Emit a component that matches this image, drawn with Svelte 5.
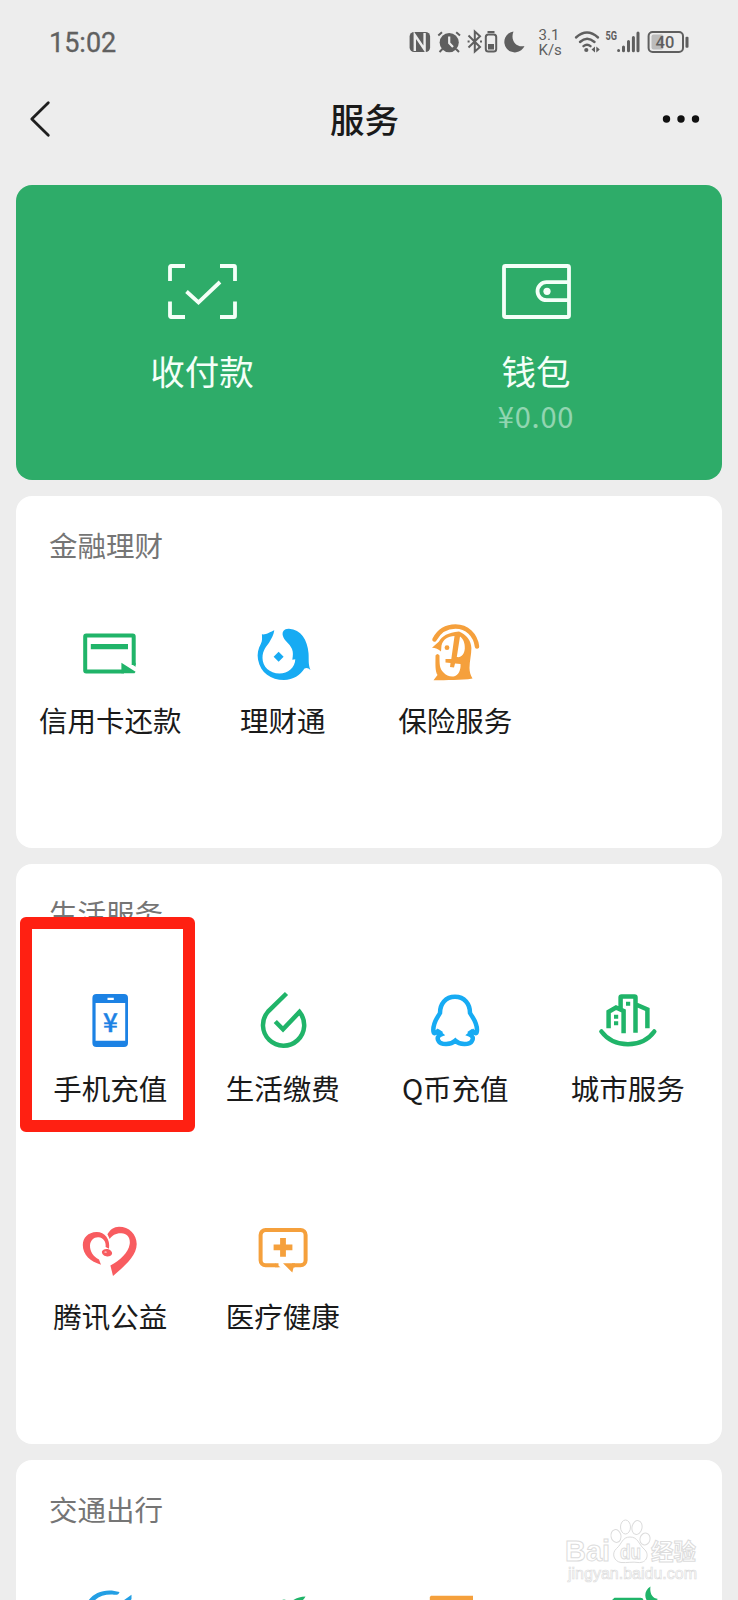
<script lang="ts">
  type Item = { icon: string; label?: string };
  type Section = { title: string; items: Item[] };

  const sections: Section[] = [
    {
      title: '金融理财',
      items: [
        { icon: 'card', label: '信用卡还款' },
        { icon: 'fish', label: '理财通' },
        { icon: 'umbrella', label: '保险服务' },
      ],
    },
    {
      title: '生活服务',
      items: [
        { icon: 'phone', label: '手机充值' },
        { icon: 'drop', label: '生活缴费' },
        { icon: 'penguin', label: 'Q币充值' },
        { icon: 'city', label: '城市服务' },
        { icon: 'heart', label: '腾讯公益' },
        { icon: 'medical', label: '医疗健康' },
      ],
    },
    {
      title: '交通出行',
      items: [{ icon: 'travel' }, { icon: 'leaf' }, { icon: 'ticket' }, { icon: 'hotel' }],
    },
  ];
</script>

<!-- every service icon is drawn on a 64×64 box -->
{#snippet glyph(name: string)}
  <svg class="icon" viewBox="0 0 64 64" aria-hidden="true">
    {#if name === 'card'}
      <g class="green">
        <path class="line" d="M55.7 44V15.5a1 1 0 0 0-1-1H8.2a1 1 0 0 0-1 1V49.5a1 1 0 0 0 1 1H46" />
        <path d="M12.8 23H50v5.2H12.8z" />
        <path d="M43.4 41.7 57.6 50.7 56.5 52.3H43.4zM53.8 43.2l3.8 2.6v-4z" />
      </g>
    {:else if name === 'fish'}
      <g class="sky">
        <path
          d="M23.3 9.2C20 10.5 15 14 10.9 13.3C11 17 11.5 19.5 10 22.5C7 28 6 33 7 38.5C9.5 52 20 59 33 59C42 59 49.5 54 53.5 47.5C55.5 46.3 57.5 47 59.5 49C57 43.5 58 38 57.5 32C56.5 19 50 8.5 38 7.7C33 7.5 31 10.5 31.8 14.5C32.8 19.5 38.5 22 41 28C42.3 31.5 42 34.5 41.3 38.8L44.3 38.2C44 46.5 37 52.5 28.5 52.5C18.5 52.5 11.5 45.5 11.5 37C11.5 29 15.5 25.5 18.2 21.5C20.5 17.5 22.6 14 23.3 9.2Z"
        />
        <path d="M27.6 30.7l5 5-5 5-5-5z" />
      </g>
    {:else if name === 'umbrella'}
      <g class="orange">
        <path class="line thick round" d="M11.5 18.5C16 10 23.5 5.5 32.5 5.5C44 5.5 52.5 14 54 25.5" />
        <path
          fill-rule="evenodd"
          d="M9 26.7L16 20.5C19 15 25 11.5 36 10.5C43 13 48.4 20 48.4 27C48.4 34 46.5 40 46.5 47C46.5 51 47.5 54 49.5 57.5C38 59.5 24 59 10.5 59.2L14.5 54C12 50 12.5 44 12.5 34.5Q14.5 31.5 16.5 34.5C16.5 43 16.5 48 20.5 51.5C23 54.5 27 56 30.5 55.5C35.5 54.5 38 49 37.5 43L32 42.5 31 46.5 27 46 27.5 42 22.5 41.5V38H28.3L31.5 15C25 15 20 18.5 18.5 24.5L18 30.5C15.5 28 12.5 27 9 26.7ZM37 15.5L33.8 36C38 37 41.5 33 41.8 27.5C42 22.5 40.5 18 37 15.5Z"
        />
        <circle cx="24" cy="26.7" r="2.4" />
      </g>
    {:else if name === 'phone'}
      <g class="blue">
        <path
          fill-rule="evenodd"
          d="M18.4 5H46a4 4 0 0 1 4 4v45a4 4 0 0 1-4 4H18.4a4 4 0 0 1-4-4V9a4 4 0 0 1 4-4zM17.6 14v37.7h29.6V14zM29.5 8.7v2.2h6.3V8.7z"
        />
        <text class="yen" x="32.4" y="43.3" text-anchor="middle">¥</text>
      </g>
    {:else if name === 'drop'}
      <g class="green">
        <path class="line thick" d="M35.5 4.5L17 22.6A20.6 20.6 0 1 0 48.5 23L32 40.3L24.3 32.5" />
      </g>
    {:else if name === 'penguin'}
      <g class="sky">
        <path
          class="line thick"
          d="M32 7.8C22.5 7.8 17 15 17 24C14.5 28.5 10.3 33 10.3 41C10.3 45.5 12.5 44.5 14.5 42.5L18 45.5C14.5 47 14 49.5 15.5 51.8C18 56.3 28 55.8 32.3 51.6C36.5 55.8 46.5 56.3 49 51.8C50.5 49.5 50 47 46.5 45.5L50 42.5C52 44.5 54 45.5 54 41C54 33 49.5 28.5 47 24C47 15 41.5 7.8 32 7.8Z"
        />
        <path d="M15.5 40l4.5 3-3 4-4-2.5zM48.8 40l-4.5 3 3 4 4-2.5z" />
      </g>
    {:else if name === 'city'}
      <g class="green">
        <path class="line thick" d="M12.6 39.3V22.7L20 18.5L27.6 22V44.3M24.6 20V8.5a1 1 0 0 1 1-1H38.5a1 1 0 0 1 1 1V43.7M40 15.5L51.4 20.5V39.3" />
        <path class="line thick round" d="M5.4 42.5C18 59.5 46 59.5 58.3 42.5" />
        <path d="M18 25.7h4.2v4H18zM18 32.3h4.2v4H18zM30 12.7h4.2v4H30z" />
      </g>
    {:else if name === 'heart'}
      <g class="red">
        <path
          d="M31 31.8C32.5 22 26.5 14.8 18.5 15C10 15.2 4.8 21 4.8 28C4.8 38 12.5 44.5 23 47.7L21 42.5C15 39.5 11.8 34 12 28.5C12.2 23.5 16 20 20.5 20.3C25.5 20.7 28.3 25 27.6 30Z"
        />
        <path
          d="M29.4 17.3C32 12.5 36 9.7 41 9.7C51 9.7 58.7 17 58.7 27C58.7 39 47 48.5 35 59L32.4 48.5C42 43.5 50.5 35.5 51.7 27C52.5 20.5 49 16.5 43.5 16.3C38 16 34 18.5 31.7 22Z"
        />
        <ellipse cx="29" cy="35.7" rx="5.2" ry="3.7" transform="rotate(12 29 35.7)" />
        <ellipse class="shine" cx="27.6" cy="35" rx="1.3" ry=".6" />
      </g>
    {:else if name === 'medical'}
      <g class="orange">
        <path class="line" d="M27.5 48.3H14.6a5 5 0 0 1-5-5V18a5 5 0 0 1 5-5H49.6a5 5 0 0 1 5 5V43.3a5 5 0 0 1-5 5H41" />
        <path d="M32 46.3H44V50.3L42.6 50.5 41.3 55.5zM24 46.3l5.5 4H24z" />
        <path d="M29.1 21h5.8v6.5h6.5v5.8h-6.5v6.5h-5.8v-6.5h-6.5v-5.8h6.5z" />
      </g>
    {:else if name === 'travel'}
      <g class="azure">
        <path d="M9 18C14 8 27 2.5 41.5 7C41 9.5 39 10 36 9.7C27 9 19 11.5 14.5 18Z" />
        <path d="M42 18L53.5 9.7V14L51 18z" />
      </g>
    {:else if name === 'leaf'}
      <g class="green">
        <path d="M40 17C44 13 49 11.7 54.5 11.5C53.5 14 51 16 48 18zM29 16.5Q33 12.5 37 16.5z" />
      </g>
    {:else if name === 'ticket'}
      <g class="orange">
        <path d="M8 10.7H50V40H6.8V12z" />
      </g>
    {:else if name === 'hotel'}
      <g class="green">
        <path d="M18.5 12.7H44.5a3 3 0 0 1 3 3V40H15V16z" />
        <path d="M54.5 1.5C47 6 48 16 55 19L62 14C56 13 53.5 8 54.5 1.5Z" />
      </g>
    {/if}
  </svg>
{/snippet}

<div class="screen">
  <header class="status">
    <span class="time">15:02</span>
    <svg class="indicators" width="320" height="50" viewBox="0 0 320 50" aria-hidden="true">
      <!-- nfc -->
      <rect x="19.6" y="12" width="20.5" height="20" rx="4.5" />
      <path class="cut" d="M24.8 31V15L34.6 29.5V13" />
      <!-- alarm -->
      <circle cx="59.2" cy="22.6" r="9.6" />
      <path class="thin" d="M48.3 15.5L52 12.3M66.2 12.3L70 15.5M52.5 29l-3 3M66 29l3 3" />
      <path class="cut slim" d="M59.2 16.5V23L63 27" />
      <!-- bluetooth with its battery -->
      <path class="thin" d="M78.5 15.5L90 27 84.8 31.5V11.5L90 16.2 78.5 27.5" />
      <path class="thin" d="M77.6 21.6h2M90 21.6h2" />
      <rect class="thin" x="95.8" y="14.6" width="10.4" height="17" rx="2.5" />
      <path d="M97.5 11h7v2h-7zM98 24h6v5.5h-6z" />
      <!-- do not disturb -->
      <path d="M123.5 11.5A10.5 10.5 0 1 0 134.5 26C126 28 120 20 123.5 11.5Z" />
      <text class="rate" x="148.5" y="19.5">3.1</text>
      <text class="rate" x="148.5" y="35">K/s</text>
      <!-- wifi -->
      <g class="wave">
        <path d="M186 17.5Q197 7.5 208 17.5" />
        <path d="M190 22Q197 15.5 204.5 22" />
        <path d="M193.5 26.2Q197 23.2 200.5 26.2" />
      </g>
      <circle cx="196.3" cy="30" r="2.1" />
      <path d="M205 26.5v6l-3.5-3zM206.3 26.5v6l3.5-3z" />
      <!-- cellular -->
      <text class="gen" x="215.5" y="20.3" textLength="11.5" lengthAdjust="spacingAndGlyphs">5G</text>
      <g class="bars">
        <path d="M228.6 30.5v.1M233.5 27v3.8M238.5 21.5v9.3M243.4 17.5v13.3M248 13v17.8" />
      </g>
      <!-- battery -->
      <rect class="fill" x="261.5" y="14.5" width="12" height="15" rx="2" />
      <rect class="thin" x="258.6" y="12" width="34.4" height="20" rx="4" />
      <rect x="295.5" y="16.8" width="3" height="11" rx="1" />
      <text class="level" x="265.5" y="28">40</text>
    </svg>
  </header>

  <nav class="bar">
    <svg class="back" width="24" height="40" viewBox="0 0 24 40" aria-hidden="true">
      <path d="M20.3 3.7L3.8 20L20.3 36.3" />
    </svg>
    <h1>服务</h1>
    <svg class="more" width="40" height="10" viewBox="0 0 40 10" aria-hidden="true">
      <circle cx="5.5" cy="5" r="3.7" />
      <circle cx="20" cy="5" r="3.7" />
      <circle cx="34.5" cy="5" r="3.7" />
    </svg>
  </nav>

  <main>
    <section class="pay">
      <div class="half">
        <svg width="69" height="55" viewBox="0 0 69 55" aria-hidden="true">
          <path d="M17 2H3a1 1 0 0 0-1 1V17M52 2H66a1 1 0 0 1 1 1V17M17 53H3a1 1 0 0 1-1-1V37.5M52 53H66a1 1 0 0 0 1-1V37.5" />
          <path d="M18.5 27.5L30.5 38.5L52 18" />
        </svg>
        <span class="name">收付款</span>
      </div>
      <div class="half">
        <svg width="69" height="55" viewBox="0 0 69 55" aria-hidden="true">
          <rect x="2" y="2" width="65" height="51" rx="1.5" />
          <path d="M67 18.2H44.5a9 9 0 0 0 0 18H67" />
          <circle class="dot" cx="45" cy="27.3" r="3.6" />
        </svg>
        <span class="name">钱包</span>
        <span class="balance">¥0.00</span>
      </div>
    </section>

    {#each sections as section (section.title)}
      <section class="card">
        <h2>{section.title}</h2>
        <div class="grid">
          {#each section.items as item (item.icon)}
            <div class="item">
              {@render glyph(item.icon)}
              {#if item.label}<span>{item.label}</span>{/if}
            </div>
          {/each}
        </div>
      </section>
    {/each}
  </main>

  <div class="marker"></div>

  <svg class="watermark" width="150" height="80" viewBox="0 0 150 80" aria-hidden="true">
    <text class="brand" x="5" y="46" font-size="30" textLength="45" lengthAdjust="spacingAndGlyphs">Bai</text>
    <ellipse cx="56" cy="21" rx="5" ry="6.5" transform="rotate(-12 56 21)" />
    <ellipse cx="65.5" cy="12" rx="5" ry="7" />
    <ellipse cx="77" cy="12.5" rx="5" ry="7" transform="rotate(12 77 12.5)" />
    <ellipse cx="85" cy="24" rx="5" ry="6" transform="rotate(15 85 24)" />
    <path d="M70 22C62 22 62 29 56.5 33.5C51 38.5 54 46.5 61 47.5C67 48 73 46.5 78 47.5C87 48.5 90 39 84 34C78.5 29 78 22 70 22Z" />
    <text class="brand" x="60" y="43.5" font-size="20" textLength="21" lengthAdjust="spacingAndGlyphs">du</text>
    <text class="brand" x="91" y="45" font-size="22.5" textLength="45">经验</text>
    <text class="url" x="8" y="64" font-size="17" textLength="129" lengthAdjust="spacingAndGlyphs">jingyan.baidu.com</text>
  </svg>
</div>

<style>
  :global(body) {
    margin: 0;
    background: #ededed;
  }
  .screen {
    position: relative;
    width: 738px;
    height: 1600px;
    overflow: hidden;
    background: #ededed;
    color: #1a1a1a;
    font-family: 'Noto Sans CJK SC', sans-serif;
  }

  .status {
    display: flex;
    justify-content: space-between;
    height: 64px;
    box-sizing: border-box;
    padding: 10px 28px 0 49px;
    color: #606060;
    font-family: Roboto, sans-serif;
  }
  .time {
    font-size: 27px;
    line-height: 66px;
    -webkit-text-stroke: 0.3px #606060;
  }
  .indicators {
    margin-top: 10px;
    fill: #5f5f5f;
  }
  .thin,
  .cut,
  .wave path,
  .bars path {
    fill: none;
    stroke: #5f5f5f;
    stroke-width: 2;
  }
  .cut {
    stroke: #ededed;
    stroke-width: 2.4;
  }
  .cut.slim {
    stroke-width: 2.2;
  }
  .wave path {
    stroke-width: 2.4;
    stroke-linecap: round;
  }
  .bars path {
    stroke-width: 3;
    stroke-linecap: round;
  }
  .fill {
    fill: #bcbcbc;
  }
  .rate {
    font-size: 15px;
  }
  .gen {
    font-size: 12.5px;
    font-weight: 700;
  }
  .level {
    font-size: 16.5px;
    font-weight: 500;
  }

  .bar {
    display: grid;
    grid-template-columns: 60px 1fr 60px;
    align-items: center;
    height: 110px;
    padding: 0 37px 0 28px;
  }
  .back path {
    fill: none;
    stroke: #1f1f1f;
    stroke-width: 2.8;
    stroke-linecap: round;
    stroke-linejoin: round;
  }
  .more {
    justify-self: end;
    fill: #111;
  }
  h1 {
    margin: 0 0 3px;
    font-size: 34.5px;
    line-height: 48px;
    font-weight: 500;
    text-align: center;
  }

  main {
    display: flex;
    flex-direction: column;
    gap: 16px;
    padding: 11px 16px 0;
  }
  .pay {
    display: flex;
    height: 295px;
    box-sizing: border-box;
    padding: 79px 19px 0;
    border-radius: 16px;
    background: #2eac69;
    color: #f4fff8;
  }
  .half {
    flex: 1;
    display: flex;
    flex-direction: column;
    align-items: center;
  }
  .half svg {
    fill: none;
    stroke: #f4fff8;
    stroke-width: 3.8;
  }
  .half .dot {
    fill: #f4fff8;
    stroke: none;
  }
  .name {
    margin-top: 27px;
    font-size: 34.5px;
    line-height: 48px;
  }
  .balance {
    font-size: 29px;
    line-height: 42px;
    letter-spacing: 0.8px;
    opacity: 0.5;
  }

  .card {
    padding: 0 8px 24px;
    border-radius: 16px;
    background: #fff;
  }
  h2 {
    margin: 0;
    padding: 0 0 0 25px;
    height: 100px;
    font-size: 28.5px;
    line-height: 98px;
    font-weight: 400;
    color: #757575;
  }
  .grid {
    display: grid;
    grid-template-columns: repeat(4, 1fr);
    grid-auto-rows: 228px;
  }
  .item {
    display: flex;
    flex-direction: column;
    align-items: center;
    padding-top: 25px;
    font-size: 28.5px;
    line-height: 40px;
    white-space: nowrap;
  }
  .icon {
    width: 64px;
    height: 64px;
    margin-bottom: 15px;
  }
  .green { fill: #20b469; stroke: #20b469; }
  .sky { fill: #17abf3; stroke: #17abf3; }
  .azure { fill: #239fe4; }
  .orange { fill: #f5a03c; stroke: #f5a03c; }
  .blue { fill: #1c82e4; stroke: #1c82e4; }
  .red { fill: #f85c60; }
  .shine { fill: #fff; }
  .icon path,
  .icon circle {
    stroke: none;
  }
  .icon path.line {
    fill: none;
    stroke: inherit;
    stroke-width: 4;
  }
  .icon path.thick {
    stroke-width: 4.5;
  }
  .icon .round {
    stroke-linecap: round;
  }
  .yen {
    font-size: 26px;
    font-weight: 500;
    stroke-width: 0.4;
  }

  /* call-out around the top-up entry */
  .marker {
    position: absolute;
    left: 20px;
    top: 917px;
    width: 175px;
    height: 215px;
    box-sizing: border-box;
    border: 12px solid #ff2012;
    border-radius: 6px;
  }
  .watermark {
    position: absolute;
    left: 560px;
    top: 1515px;
    fill: #fff;
    stroke: #dcdcdc;
    stroke-width: 1;
  }
  .brand {
    font-family: 'Liberation Sans', 'Noto Sans CJK SC', sans-serif;
    font-weight: 700;
  }
  .url {
    font-family: 'Liberation Sans', sans-serif;
    stroke-width: 0.7;
  }
</style>
